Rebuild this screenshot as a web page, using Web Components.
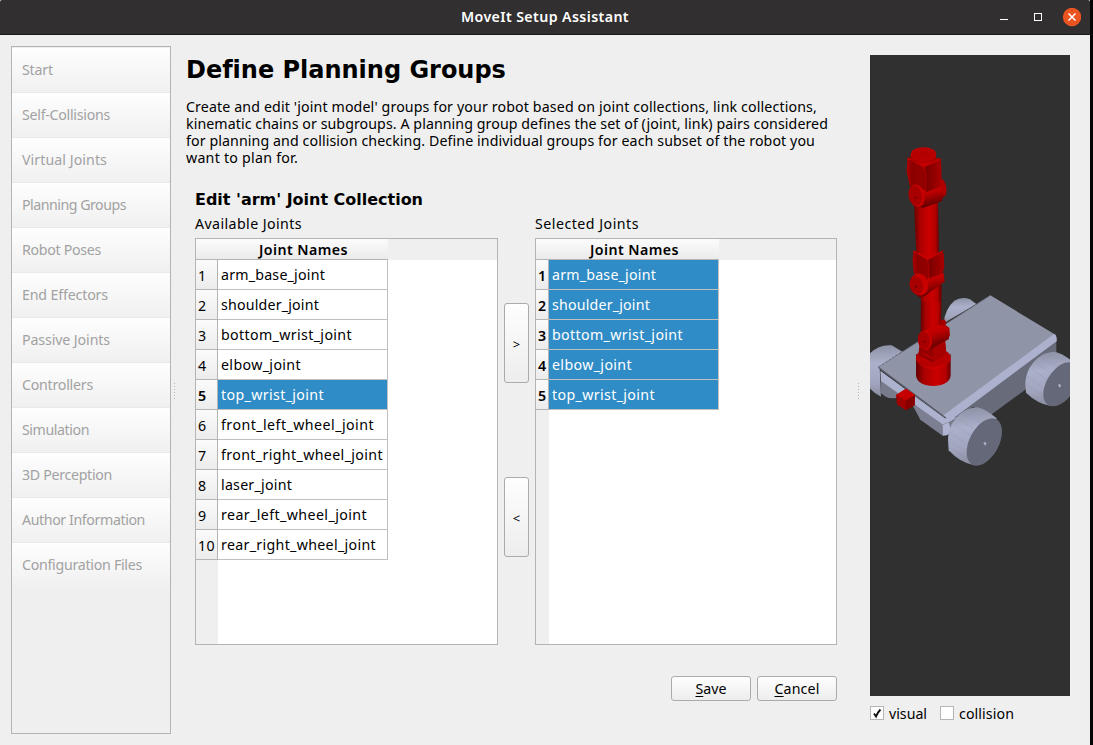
<!DOCTYPE html>
<html lang="en">
<head>
<meta charset="utf-8">
<title>MoveIt Setup Assistant</title>
<style>
html,body{margin:0;height:100%;overflow:hidden;background:#050505}
body{font:14.2px/17px "Noto Sans","Open Sans",sans-serif;color:#000}
</style>
</head>
<body>
<setup-window></setup-window>
<script>
const define = (name, html, ready) => customElements.define(name, class extends HTMLElement {
  connectedCallback() {
    if (this.shadowRoot) return;
    const t = document.createElement('template');
    t.innerHTML = html;
    this.attachShadow({mode: 'open'}).append(t.content.cloneNode(true));
    if (ready) ready(this, this.shadowRoot);
  }
});

/* One line of text tracked to a given advance width */
define('fit-text', `<style>:host{display:inline-block;white-space:pre;flex:none}</style><span><slot></slot></span>`, (el, root) => {
  const span = root.querySelector('span');
  const width = parseFloat(el.getAttribute('w'));
  const n = el.textContent.length;
  const natural = span.getBoundingClientRect().width;
  span.style.letterSpacing = ((width - natural) / n) + 'px';
  el.style.width = width + 'px';
});

define('title-bar', `<style>
:host{display:grid;grid-template-columns:1fr auto 1fr;align-items:center;height:34px;background:#322f30;border-bottom:1px solid #1b1919;color:#fff;font-weight:600;border-radius:2px 2px 0 0}
.t{padding-bottom:2px}
.b{display:flex;justify-content:flex-end;padding-right:9px;height:19px}
svg{display:block}
</style><span></span><div class="t"><slot></slot></div>
<div class="b"><svg width="84" height="19" viewBox="0 0 84 19"><path d="M3 11.500h8" stroke="#fff"/><rect x="37.500" y="5.500" width="7" height="7" fill="none" stroke="#fff"/><circle cx="75" cy="9" r="9.200" fill="#e95420"/><path d="M71.500 5.500l7 7m0-7l-7 7" stroke="#fff" stroke-width="1.500"/></svg></div>`);

define('nav-item', `<style>
:host{display:flex;align-items:center;box-sizing:border-box;height:45px;padding:0 0 1px 10px;border-bottom:1px solid #e9e9e9;background:linear-gradient(#fefefe,#f0f0f0);color:#a2a2a2}
:host(:last-of-type){border-color:#efefef}
</style><slot></slot>`);

define('nav-list', `<style>:host{display:block;box-sizing:border-box;width:160px;height:688px;border:1px solid #b4b4b4;padding-top:1px;background:#efefef}</style><slot></slot>`, el => {
  el.innerHTML = [['Start',31],['Self-Collisions',88],['Virtual Joints',85],['Planning Groups',104],['Robot Poses',79],['End Effectors',86],['Passive Joints',88],['Controllers',71],['Simulation',67],['3D Perception',90],['Author Information',123],['Configuration Files',120]]
    .map(([t, w]) => `<nav-item><fit-text w="${w}">${t}</fit-text></nav-item>`).join('');
});

define('joint-table', `<style>
:host{display:block;box-sizing:border-box;height:407px;border:1px solid #b4b4b4;background:linear-gradient(90deg,#efefef var(--head),#fff var(--head))}
.h{height:20px;background:#efefef;padding-bottom:1px}
.h div{display:flex;justify-content:center;align-items:center;box-sizing:border-box;width:calc(var(--head) + 170px);height:21px;padding:1px 0 0 23px;background:linear-gradient(#fcfcfc,#ebebeb);border-bottom:1px solid #b4b4b4;font-weight:600}
:host([narrow]) .h div{padding-left:14px}
.r{display:grid;grid-template-columns:var(--head) 170px;height:30px}
.r>*{display:flex;align-items:center;box-sizing:border-box;border-right:1px solid #b4b4b4;border-bottom:1px solid #b4b4b4}
.n{background:linear-gradient(#fbfbfb,#ececec);padding:1px 0 0 2px}
.c{background:#fff;border-color:#c0c0c0!important;padding:0 0 1px 3px}
.sel .c{background:#308cc6;color:#fff}.sel .n{font-weight:600}
</style><div class="h"><div><fit-text w="89">Joint Names</fit-text></div></div><div id="rows"></div>`, (el, root) => {
  const widths = {arm_base_joint:104,shoulder_joint:98,bottom_wrist_joint:131,elbow_joint:80,top_wrist_joint:103,front_left_wheel_joint:153,front_right_wheel_joint:162,laser_joint:71,rear_left_wheel_joint:146,rear_right_wheel_joint:155};
  const names = el.getAttribute('rows').split(' ');
  const picked = el.getAttribute('picked');
  root.querySelector('#rows').innerHTML = names.map((t, i) => `<div class="r ${picked === 'all' || picked === t ? 'sel' : ''}"><div class="n"><fit-text w="${i > 8 ? 17 : 9}">${i + 1}</fit-text></div><div class="c"><fit-text w="${widths[t]}">${t}</fit-text></div></div>`).join('');
});

define('push-button', `<style>:host{display:flex;align-items:center;justify-content:center;box-sizing:border-box;border:1px solid #ababab;border-radius:3px;background:linear-gradient(#fefefe,#ededed);width:80px;height:25px;padding-bottom:1px}
:host([tall]){width:25px;height:80px;font-size:13px;padding:3px 0 0}</style><slot></slot>`);

define('check-option', `<style>:host{display:flex;align-items:center;gap:5px;height:14px}
i{display:block;box-sizing:border-box;width:14px;height:14px;border:1px solid #b6b6b6;background:#fff}
svg{display:none}:host([checked]) svg{display:block}</style><i><svg width="12" height="12"><path d="M3 6.500L5 9.500Q6.500 5.500 9.500 2.500" fill="none" stroke="#111" stroke-width="1.900"/></svg></i><slot></slot>`);

define('split-grip', `<style>:host{display:block;width:1px;height:17px;background:repeating-linear-gradient(#b5b5b5 0 1px,transparent 1px 3px)}</style>`);

define('robot-view', `<style>:host{display:block;width:200px;height:641px;background:#303030}svg{display:block}</style>
<svg width="200" height="641" viewBox="870 55 200 641">
<defs>
<linearGradient id="tube"><stop offset="0" stop-color="#650000"/><stop offset=".25" stop-color="#ac0000"/><stop offset=".6" stop-color="#cb0000"/><stop offset=".85" stop-color="#b50000"/><stop offset="1" stop-color="#6a0000"/></linearGradient>
<linearGradient id="face"><stop offset="0" stop-color="#b00000"/><stop offset=".15" stop-color="#8c0000"/><stop offset="1" stop-color="#a00000"/></linearGradient>
<linearGradient id="side"><stop offset="0" stop-color="#760000"/><stop offset="1" stop-color="#a80000"/></linearGradient>
<linearGradient id="bar" x1="0" y1="0" x2=".35" y2="1"><stop offset="0" stop-color="#d80000"/><stop offset=".45" stop-color="#bb0000"/><stop offset="1" stop-color="#5c0000"/></linearGradient>
<linearGradient id="wheel" x1=".3" y1="0" x2=".35" y2="1"><stop offset="0" stop-color="#8d91a5"/><stop offset=".35" stop-color="#abb0cb"/><stop offset=".7" stop-color="#a2a6bf"/><stop offset="1" stop-color="#8a8ea2"/></linearGradient>
</defs>
<g transform="translate(865 280) scale(.333333)">
<path d="M10 225Q40 192 80 196L112 215 44 262 48 350Q28 342 10 320Z" fill="url(#wheel)"/>
<path d="M48 298L100 330 110 352Q76 359 62 350L46 338Z" fill="#777b8c"/>
<path d="M236 130Q240 86 268 62Q290 49 315 58L334 72Z" fill="url(#wheel)"/>
<path d="M574 180V222L480 330 374 407 325 380 275 412 250 422Z" fill="#686b7a"/>
<path d="M40 262L376 46 574 166 236 408Z" fill="#9094a7"/>
<path d="M40 261L376 46" stroke="#5c5f6c" stroke-width="2.500" stroke-dasharray="9 3"/>
<path d="M567 162Q577 166 575 184L258 420 232 408Z" fill="#acb1cd"/>
<path d="M46 272L240 415 278 412 253 427 232 434 48 303Z" fill="#adb2cf"/>
<path d="M40 262L240 412" stroke="#5f6270" stroke-width="3.500"/>
<path d="M138 367L232 433 233 467 166 419Z" fill="#7b7f91"/>
<path d="M232 434L253 427 259 456 246 466 233 467Z" fill="#b0b5d1"/>
<path d="M253 427L279 412 262 445 256 443Z" fill="#7a7e8f"/>
<path d="M249 480C249 426 292 382 337 382Q360 386 395 415L325 555Q285 548 251 511Z" fill="url(#wheel)"/>
<path d="M267 435l54 35M281 417l53 34M301 400l52 32M252 455l54 38M250 481l54 34M253 503l54 31" stroke="#8489a1" stroke-opacity=".12" stroke-width="4"/>
<ellipse cx="358" cy="486" rx="44" ry="77" fill="#656878" transform="rotate(28 358 486)"/><path d="M355 489l5-4 5 6-5 6z" fill="#abb0ca"/>
<g transform="translate(232 -167)"><path d="M249 480C249 426 292 382 337 382Q360 386 395 415L325 545Q285 538 251 505Z" fill="url(#wheel)"/>
<path d="M267 435l54 35M281 417l53 34M301 400l52 32M252 455l54 38M250 481l54 34" stroke="#8489a1" stroke-opacity=".12" stroke-width="4"/>
<ellipse cx="356" cy="480" rx="43" ry="73" fill="#656878" transform="rotate(32 356 480)"/><path d="M347 482l5-4 5 6-5 6z" fill="#abb0ca"/></g>
<path d="M123 326L150 345 149 376 122 391 96 373 93 345Z" fill="#a00000"/><path d="M123 326L150 345 123 361 93 345Z" fill="#c60000"/><path d="M123 361L150 345 149 376 122 391Z" fill="#870000"/>
<path d="M153 222Q205 258 257 222V285C257 329 153 329 153 285Z" fill="url(#tube)"/>
<ellipse cx="205" cy="231" rx="51" ry="28" fill="#b60000"/>
<path d="M153 235Q160 260 205 266Q250 260 257 235" fill="none" stroke="#d40000" stroke-width="3"/>
<path d="M164 189L240 176 244 227 205 252 160 228Z" fill="#940000"/><path d="M205 205L240 180 244 226 205 251Z" fill="#a80000"/>
<path d="M160 228L205 251 244 226M171 220L205 236" fill="none" stroke="#cb0000" stroke-width="3"/>
<path d="M168 35L230 15 228 165Q195 185 167 154Z" fill="url(#tube)"/>
<path d="M228 121l10-3 6 9-2 9 11 7 2 24-11 12-20-12z" fill="#a50000"/>
<path d="M178 153L225 134 250 143 252 177 200 205 174 210Z" fill="url(#bar)"/>
<ellipse cx="180" cy="181" rx="21" ry="29" fill="#cc0000" transform="rotate(-8 180 181)"/><ellipse cx="177" cy="181" rx="18" ry="27" fill="#a80000" transform="rotate(-8 177 181)"/><path d="M176 181l5 3v4l-5-2z" fill="#600000"/>
</g>
<g transform="translate(865 130) scale(.333333)">
<path d="M147 222L219 214 222 372Q190 394 154 370Z" fill="url(#tube)"/>
<path d="M160 480L226 460 227 515H170Z" fill="url(#tube)"/>
<path d="M145 363L158 366 188 382 224 368 233 360 238 410 231 440 188 451 146 430 143 390Z" fill="url(#face)"/>
<path d="M188 390L236 370Q240 420 225 447L190 450Z" fill="url(#side)"/>
<path d="M145 363L188 380 235 363 188 389Z" fill="#cf0000" stroke="#c40000" stroke-width="2"/><path d="M188 388Q195 420 190 450" fill="none" stroke="#c20000" stroke-width="2.500"/>
<path d="M156 432L185 447 236 429 239 455 178 499 165 503 150 491Z" fill="url(#bar)"/>
<ellipse cx="163" cy="463" rx="27" ry="33" fill="#c90000" transform="rotate(-15 163 463)"/><ellipse cx="154" cy="466" rx="20" ry="28" fill="#a80000" transform="rotate(-15 154 466)"/><path d="M151 465l6 3v5l-6-2z" fill="#600000"/>
<ellipse cx="232" cy="173" rx="12" ry="27" fill="#b20000" transform="rotate(-10 232 173)"/>
<path d="M127 83L140 82 215 84 227 85 230 150 219 184 176 191 134 168 125 125Z" fill="url(#face)"/>
<path d="M179 111L227 88Q233 135 220 180L178 190Z" fill="url(#side)"/>
<path d="M127 85L155 92 200 92 227 88 176 111Z" fill="#c60000" stroke="#c60000" stroke-width="2"/><path d="M177 111Q188 145 179 190" fill="none" stroke="#c20000" stroke-width="2.500"/>
<path d="M137 74V91Q175 106 213 91V74Z" fill="#a60000"/><ellipse cx="175.500" cy="73" rx="38" ry="21.500" fill="#c60000"/><ellipse cx="175.500" cy="73.500" rx="35" ry="19" fill="#b60000"/><path d="M167 70h16" stroke="#8c0000" stroke-width="2" stroke-dasharray="3 2"/>
<path d="M156 166L185 186 232 168 243 188 233 205 231 213 177 233 155 230Z" fill="url(#bar)"/>
<path d="M225 150Q243 155 243 180L233 197Q238 170 225 150Z" fill="#b00000"/>
<ellipse cx="155" cy="197" rx="23" ry="34" fill="#ca0000" transform="rotate(-12 155 197)"/><ellipse cx="151" cy="197" rx="20" ry="31" fill="#a80000" transform="rotate(-12 151 197)"/><path d="M149 199l5 3v5l-5-2z" fill="#600000"/>
</g>
</svg>`);

define('setup-window', `<style>
:host{display:block;box-sizing:border-box;width:1090px;height:745px;background:#efefef}
main{display:flex;padding:11px 0 0 11px}
.g1{margin:337px 11px 0 3px;flex:none}
.g2{margin:337px 11px 0 21px;flex:none}
.page{width:651px;flex:none;padding-top:8px}
h1{margin:0;font:bold 24px/32px "DejaVu Sans",sans-serif}
p{margin:12px 0 0;display:flex;flex-direction:column;align-items:flex-start}
h2{margin:25px 0 0 9px;font:bold 16px/18px "DejaVu Sans",sans-serif}
.tables{display:grid;grid-template-columns:303px 25px 302px;column-gap:6px;margin:5px 0 0 9px}
.label{height:24px;display:flex;padding-top:1px;box-sizing:border-box}
.mid{padding-top:89px;display:flex;flex-direction:column;gap:94px}
.act{display:flex;justify-content:flex-end;gap:6px;margin-top:31px}
.view{padding-top:9px;flex:none}
.opts{display:flex;gap:13px;margin-top:10px}
u{text-underline-offset:2px}
</style>
<title-bar><fit-text w="168">MoveIt Setup Assistant</fit-text></title-bar>
<main>
<nav-list></nav-list><split-grip class="g1"></split-grip>
<section class="page">
<h1><fit-text w="319">Define Planning Groups</fit-text></h1>
<p><fit-text w="631">Create and edit 'joint model' groups for your robot based on joint collections, link collections,</fit-text><fit-text w="642">kinematic chains or subgroups. A planning group defines the set of (joint, link) pairs considered</fit-text><fit-text w="629">for planning and collision checking. Define individual groups for each subset of the robot you</fit-text><fit-text w="112">want to plan for.</fit-text></p>
<h2><fit-text w="228">Edit 'arm' Joint Collection</fit-text></h2>
<div class="tables">
<div><div class="label"><fit-text w="107">Available Joints</fit-text></div><joint-table style="--head:22px" picked="top_wrist_joint" rows="arm_base_joint shoulder_joint bottom_wrist_joint elbow_joint top_wrist_joint front_left_wheel_joint front_right_wheel_joint laser_joint rear_left_wheel_joint rear_right_wheel_joint"></joint-table></div>
<div class="mid"><push-button tall>&gt;</push-button><push-button tall>&lt;</push-button></div>
<div><div class="label"><fit-text w="104">Selected Joints</fit-text></div><joint-table narrow style="--head:13px" picked="all" rows="arm_base_joint shoulder_joint bottom_wrist_joint elbow_joint top_wrist_joint"></joint-table></div>
</div>
<div class="act"><push-button><fit-text w="31"><u>S</u>ave</fit-text></push-button><push-button><fit-text w="45"><u>C</u>ancel</fit-text></push-button></div>
</section>
<split-grip class="g2"></split-grip>
<aside class="view"><robot-view></robot-view><div class="opts"><check-option checked><fit-text w="38">visual</fit-text></check-option><check-option><fit-text w="55">collision</fit-text></check-option></div></aside>
</main>`);
</script>
</body>
</html>
